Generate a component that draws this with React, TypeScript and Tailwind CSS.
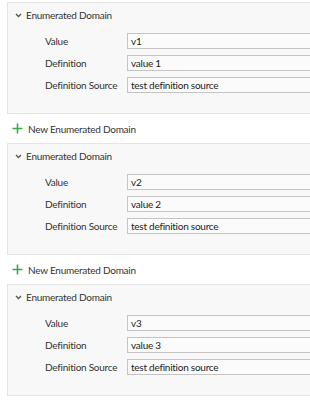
import React from "react";

const domains = [
  { id: 1, value: "v1", definition: "value 1", source: "test definition source" },
  { id: 2, value: "v2", definition: "value 2", source: "test definition source" },
  { id: 3, value: "v3", definition: "value 3", source: "test definition source" },
];

const Field = ({ label, value }: { label: string; value: string }) => (
  <div className="flex items-center h-[16px]">
    <div className="w-[82px] shrink-0 pl-[37px] box-content text-[#333]">{label}</div>
    <div className="h-[16px] flex-1 border border-[#c4c4c4] bg-[#fbfbfb] flex items-center pl-[3px] text-[#222]">
      {value}
    </div>
  </div>
);

const DomainPanel = ({ value, definition, source }: { value: string; definition: string; source: string }) => (
  <div className="w-[320px] h-[112px] border border-r-0 border-[#e4e4e4] bg-[#f8f8f8]">
    <div className="h-[24px] flex items-center pl-[7px] gap-[4px] text-[#333]">
      <svg width="7" height="5" viewBox="0 0 7 5" className="mt-[1px]">
        <path d="M1 1 L3.5 3.5 L6 1" fill="none" stroke="#555" strokeWidth="1.3" />
      </svg>
      <span>Enumerated Domain</span>
    </div>
    <div className="mt-[6px] flex flex-col gap-[6px]">
      <Field label="Value" value={value} />
      <Field label="Definition" value={definition} />
      <Field label="Definition Source" value={source} />
    </div>
  </div>
);

const NewDomain = () => (
  <div className="h-[29px] flex items-center pl-[5px] gap-[5px] text-[#333]">
    <svg width="11" height="11" viewBox="0 0 11 11">
      <path d="M5.5 0.5 V10.5 M0.5 5.5 H10.5" stroke="#3fa648" strokeWidth="1.6" />
    </svg>
    <span>New Enumerated Domain</span>
  </div>
);

export default function App() {
  return (
    <div
      className="w-[310px] h-[400px] overflow-hidden bg-white pt-[2px] pl-[7px] text-[10px] leading-none tracking-[-0.25px]"
      style={{ fontFamily: 'Lato, "Open Sans", sans-serif' }}
    >
      {domains.map((d, i) => (
        <React.Fragment key={d.id}>
          {i > 0 && <NewDomain />}
          <DomainPanel value={d.value} definition={d.definition} source={d.source} />
        </React.Fragment>
      ))}
    </div>
  );
}
